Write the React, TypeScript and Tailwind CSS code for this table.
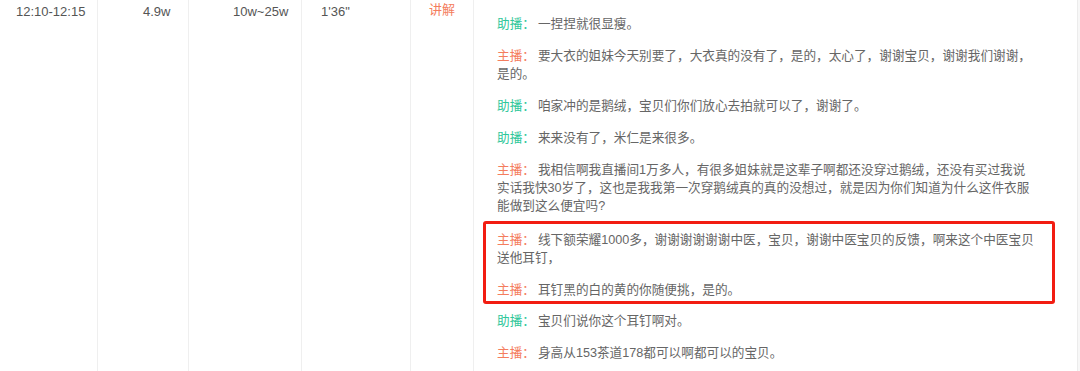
import React from "react";

type Line = { role: "主播" | "助播"; text: string };

const before: Line[] = [
  { role: "助播", text: "一捏捏就很显瘦。" },
  { role: "主播", text: "要大衣的姐妹今天别要了，大衣真的没有了，是的，太心了，谢谢宝贝，谢谢我们谢谢，是的。" },
  { role: "助播", text: "咱家冲的是鹅绒，宝贝们你们放心去拍就可以了，谢谢了。" },
  { role: "助播", text: "来来没有了，米仁是来很多。" },
  { role: "主播", text: "我相信啊我直播间1万多人，有很多姐妹就是这辈子啊都还没穿过鹅绒，还没有买过我说实话我快30岁了，这也是我我第一次穿鹅绒真的真的没想过，就是因为你们知道为什么这件衣服能做到这么便宜吗?" },
];

const marked: Line[] = [
  { role: "主播", text: "线下额荣耀1000多，谢谢谢谢谢谢中医，宝贝，谢谢中医宝贝的反馈，啊来这个中医宝贝送他耳钉，" },
  { role: "主播", text: "耳钉黑的白的黄的你随便挑，是的。" },
];

const after: Line[] = [
  { role: "助播", text: "宝贝们说你这个耳钉啊对。" },
  { role: "主播", text: "身高从153茶道178都可以啊都可以的宝贝。" },
];

// 主播 in salmon, 助播 in green
const Para = ({ line, last }: { line: Line; last?: boolean }) => (
  <p className={last ? "leading-[18px]" : "mb-[14px] leading-[18px]"}>
    <span className={line.role === "主播" ? "mr-[3px] text-[#f47d5e]" : "mr-[3px] text-[#2fc79a]"}>
      {line.role}：
    </span>
    <span>{line.text}</span>
  </p>
);

export default function App() {
  return (
    <div
      className="flex h-[371px] w-[1080px] overflow-hidden bg-white text-[13px] text-[#555]"
      style={{ fontFamily: '"Liberation Sans", "Noto Sans CJK SC", sans-serif' }}
    >
      <div className="w-[98px] shrink-0 border-r border-[#efefef] pl-[16px] pt-[3px] leading-[18px]">12:10-12:15</div>
      <div className="w-[91px] shrink-0 border-r border-[#efefef] pl-[45px] pt-[3px] leading-[18px]">4.9w</div>
      <div className="w-[113px] shrink-0 border-r border-[#efefef] pl-[44px] pt-[3px] leading-[18px]">10w~25w</div>
      <div className="w-[109px] shrink-0 border-r border-[#efefef] pl-[19px] pt-[3px] leading-[18px]">1'36"</div>
      <div className="w-[63px] shrink-0 border-r border-[#efefef] pt-[1px] text-center leading-[18px] text-[#f47d5e]">讲解</div>
      <div className="w-[604px] shrink-0 border-r border-[#ececec] pt-[15px] pr-[40px] pl-[23px] text-[12.65px] text-[#666]">
        {before.map((l, i) => (
          <Para key={i} line={l} />
        ))}
        <div className="-mt-[8px] mb-[8px] -ml-[14px] -mr-[18px] rounded-[3px] border-[3px] border-[#f21d12] pt-[7px] pr-[15px] pb-[2px] pl-[11px]">
          {marked.map((l, i) => (
            <Para key={i} line={l} last={i === marked.length - 1} />
          ))}
        </div>
        {after.map((l, i) => (
          <Para key={i} line={l} />
        ))}
      </div>
      <div className="flex-1 bg-[#f7f7f7]" />
    </div>
  );
}
